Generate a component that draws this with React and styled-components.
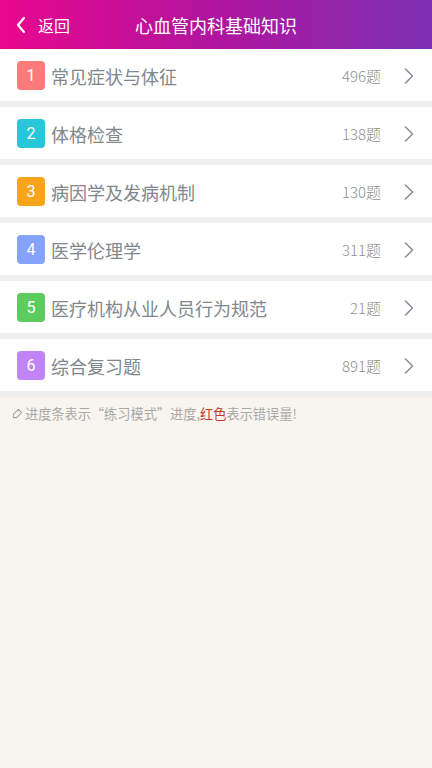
import React from 'react';
import styled, { createGlobalStyle } from 'styled-components';

const GlobalStyle = createGlobalStyle`
  html, body {
    margin: 0;
    padding: 0;
    background: #f8f5ee;
    font-family: "Noto Sans CJK SC", Roboto, "Noto Sans", sans-serif;
  }
`;

const Page = styled.div`
  width: 432px;
  min-height: 768px;
  background: #f8f5ee;
`;

const TopBar = styled.div`
  height: 49px;
  display: flex;
  align-items: center;
  position: relative;
  background: linear-gradient(90deg, #e9078e 0%, #b0159f 50%, #7b2fb1 100%);
  color: #fff;
`;

const Back = styled.div`
  display: flex;
  align-items: center;
  gap: 11px;
  padding-left: 15px;
  font-size: 16px;
  z-index: 1;
`;

const BarTitle = styled.div`
  position: absolute;
  left: 0;
  right: 0;
  text-align: center;
  font-size: 18px;
`;

const List = styled.div`
  display: flex;
  flex-direction: column;
  background: #efefef;
  gap: 6px;
  padding-bottom: 6px;
`;

const Row = styled.div`
  height: 52px;
  display: flex;
  align-items: center;
  background: #fff;
  padding: 1px 18px 0 17px;
  box-sizing: border-box;
`;

const Badge = styled.div`
  width: 28px;
  height: 29px;
  border-radius: 4px;
  background: ${(p) => p.$color};
  color: #fff;
  font-size: 16px;
  display: flex;
  align-items: center;
  justify-content: center;
  font-family: Roboto, "Noto Sans", sans-serif;
`;

const Name = styled.div`
  flex: 1;
  margin-left: 6px;
  font-size: 18px;
  color: #80888d;
`;

const Count = styled.div`
  font-size: 15px;
  font-weight: 300;
  color: #8f8f8f;
  margin-right: 23px;
`;

const Hint = styled.div`
  display: flex;
  align-items: center;
  gap: 2px;
  padding: 7px 12px;
  font-size: 13.2px;
  color: #a8a8a8;
`;

const Red = styled.span`
  color: #c0392b;
`;

const Chevron = () => (
  <svg width="10" height="16" viewBox="0 0 10 16" fill="none">
    <path d="M1.5 1l7 7-7 7" stroke="#8b9195" strokeWidth="1.6" strokeLinecap="round" strokeLinejoin="round" />
  </svg>
);

const items = [
  { n: 1, name: '常见症状与体征', count: 496, color: '#fb7b7b' },
  { n: 2, name: '体格检查', count: 138, color: '#29c6d9' },
  { n: 3, name: '病因学及发病机制', count: 130, color: '#f8a51c' },
  { n: 4, name: '医学伦理学', count: 311, color: '#86a3fb' },
  { n: 5, name: '医疗机构从业人员行为规范', count: 21, color: '#5ccc5e' },
  { n: 6, name: '综合复习题', count: 891, color: '#c184f6' },
];

export default function App() {
  return (
    <Page>
      <GlobalStyle />
      <TopBar>
        <Back>
          <svg width="12" height="18" viewBox="0 0 12 18" fill="none">
            <path d="M9 2L3 9l6 7" stroke="#fff" strokeWidth="2.2" strokeLinecap="round" strokeLinejoin="round" />
          </svg>
          返回
        </Back>
        <BarTitle>心血管内科基础知识</BarTitle>
      </TopBar>
      <List>
        {items.map((it) => (
          <Row key={it.n}>
            <Badge $color={it.color}>{it.n}</Badge>
            <Name>{it.name}</Name>
            <Count>{it.count}题</Count>
            <Chevron />
          </Row>
        ))}
      </List>
      <Hint>
        <svg width="11" height="11" viewBox="0 0 12 12" fill="none">
          <path d="M7 1.5l3.5 3.5L5 10.5H1.5V7z" stroke="#a3a3a3" strokeWidth="1.1" strokeLinejoin="round" />
        </svg>
        <span>
          进度条表示“练习模式”进度,<Red>红色</Red>表示错误量!
        </span>
      </Hint>
    </Page>
  );
}
